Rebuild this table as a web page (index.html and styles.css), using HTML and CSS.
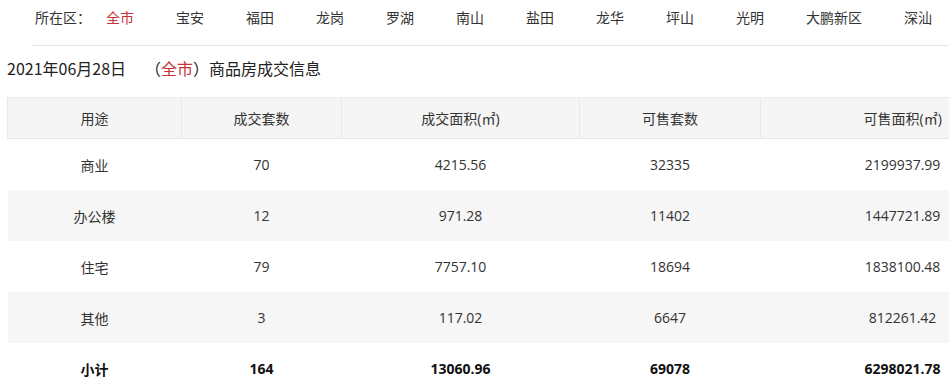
FILE: index.html
```html
<!DOCTYPE html>
<html lang="zh-CN">
<head>
<meta charset="utf-8">
<title>商品房成交信息</title>
<link rel="stylesheet" href="styles.css">
</head>
<body>
<div class="page">
  <div class="nav">
    <span class="nav-label">所在区：</span>
    <a class="nav-item active">全市</a>
    <a class="nav-item">宝安</a>
    <a class="nav-item">福田</a>
    <a class="nav-item">龙岗</a>
    <a class="nav-item">罗湖</a>
    <a class="nav-item">南山</a>
    <a class="nav-item">盐田</a>
    <a class="nav-item">龙华</a>
    <a class="nav-item">坪山</a>
    <a class="nav-item">光明</a>
    <a class="nav-item">大鹏新区</a>
    <a class="nav-item">深汕</a>
  </div>
  <div class="divider"></div>
  <div class="title"><span class="date">2021年06月28日</span><span class="paren">（<span class="red">全市</span>）</span>商品房成交信息</div>
  <table class="data">
    <colgroup>
      <col class="c1"><col class="c2"><col class="c3"><col class="c4"><col class="c5">
    </colgroup>
    <thead>
      <tr><th>用途</th><th>成交套数</th><th>成交面积(㎡)</th><th>可售套数</th><th>可售面积(㎡)</th></tr>
    </thead>
    <tbody>
      <tr><td>商业</td><td>70</td><td>4215.56</td><td>32335</td><td>2199937.99</td></tr>
      <tr class="alt"><td>办公楼</td><td>12</td><td>971.28</td><td>11402</td><td>1447721.89</td></tr>
      <tr><td>住宅</td><td>79</td><td>7757.10</td><td>18694</td><td>1838100.48</td></tr>
      <tr class="alt"><td>其他</td><td>3</td><td>117.02</td><td>6647</td><td>812261.42</td></tr>
      <tr class="total"><td>小计</td><td>164</td><td>13060.96</td><td>69078</td><td>6298021.78</td></tr>
    </tbody>
  </table>
</div>
</body>
</html>
```

FILE: styles.css
```css
html, body {
  margin: 0;
  padding: 0;
  background: #fff;
}
body {
  font-family: "Open Sans", "Noto Sans CJK SC", sans-serif;
  color: #333;
  overflow: hidden;
}
.page {
  width: 949px;
  overflow: hidden;
}
.nav {
  display: flex;
  align-items: center;
  height: 34px;
  padding-left: 35px;
  font-size: 14px;
  color: #333;
}
.nav-label {
  width: 71px;
  flex: none;
}
.nav-item {
  margin-right: 42px;
  flex: none;
  color: #333;
}
.nav-item.active {
  color: #c8303a;
}
.divider {
  margin: 11px 0 0 32px;
  border-top: 1px solid #e6e6e6;
}
.title {
  margin: 10px 0 0 7px;
  height: 24px;
  line-height: 24px;
  font-size: 16px;
  color: #222;
  font-family: "Noto Sans CJK SC", sans-serif;
}
.title .paren {
  margin-left: 19px;
}
.red {
  color: #c8303a;
}
.data {
  margin: 17px 0 0 7px;
  width: 1037px;
  border-collapse: collapse;
  table-layout: fixed;
  font-size: 14px;
}
.c1 { width: 174px; }
.c2 { width: 160px; }
.c3 { width: 238px; }
.c4 { width: 181px; }
.c5 { width: 284px; }
.data th {
  height: 40px;
  padding: 0;
  background: #f5f5f5;
  border-top: 1px solid #ececec;
  border-bottom: 1px solid #e6e6e6;
  border-left: 1px solid #e8e8e8;
  font-weight: normal;
  color: #333;
  text-align: center;
}
.data td {
  height: 51px;
  padding: 0;
  text-align: center;
  color: #333;
}
.data tr.alt td {
  background: #f6f6f6;
}
.data tr.total td {
  font-weight: bold;
  color: #111;
}
```
